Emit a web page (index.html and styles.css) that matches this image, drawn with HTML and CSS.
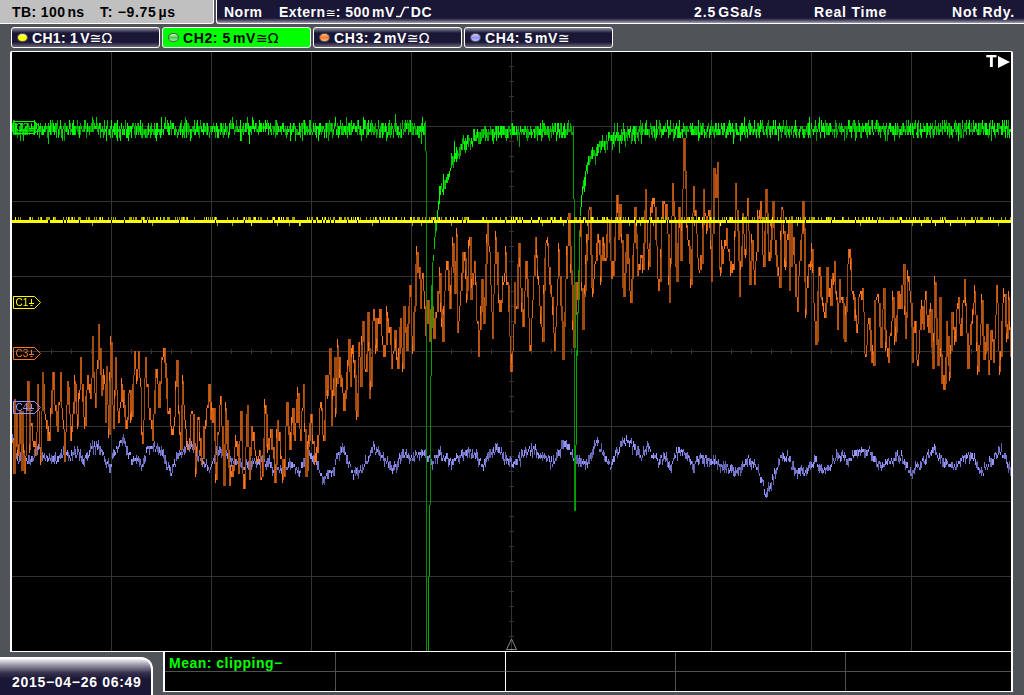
FILE: index.html
```html
<!DOCTYPE html>
<html lang="en">
<head>
  <meta charset="UTF-8" />
  <meta name="viewport" content="width=device-width, initial-scale=1.0" />
  <title>Oscilloscope</title>
  <link rel="stylesheet" href="styles.css">
</head>
<body>
  <header class="topbar">
    <div class="timebase"><span class="tb">TB: 100<i></i>ns</span><span class="pos">T: −9.75<i></i>µs</span></div>
    <div class="trigger">
      <span class="mode">Norm</span>
      <span class="source">Extern<b class="coupling">≅</b>: 500<i></i>mV<svg class="edge" width="14" height="12"><path d="M0 10.500h4.500L8.500 1.500h4.500" /></svg>DC</span>
      <span class="rate">2.5<i></i>GSa/s</span>
      <span class="acq">Real Time</span>
      <span class="state">Not Rdy.</span>
    </div>
  </header>

  <nav class="channels">
    <div class="channel ch1"><span class="led"></span><span>CH1: 1<i></i>V</span><b class="coupling">≅Ω</b></div>
    <div class="channel ch2 active"><span class="led"></span><span>CH2: 5<i></i>mV</span><b class="coupling">≅Ω</b></div>
    <div class="channel ch3"><span class="led"></span><span>CH3: 2<i></i>mV</span><b class="coupling">≅Ω</b></div>
    <div class="channel ch4"><span class="led"></span><span>CH4: 5<i></i>mV</span><b class="coupling">≅</b></div>
  </nav>

  <main class="screen">
    <canvas id="plot" width="999" height="599"></canvas>
    <svg class="marker m1" width="29" height="13"><path d="M.5 .5h21l6 6-6 6H.5z" /><text x="2.5" y="10">C1</text><path d="M18.500 3v5M16 7.500h5M17.500 9.500h2" /></svg>
    <svg class="marker m2" width="29" height="13"><path d="M.5 .5h21l6 6-6 6H.5z" /><text x="2.5" y="10">C2</text><path d="M18.500 3v5M16 7.500h5M17.500 9.500h2" /></svg>
    <svg class="marker m3" width="29" height="13"><path d="M.5 .5h21l6 6-6 6H.5z" /><text x="2.5" y="10">C3</text><path d="M18.500 3v5M16 7.500h5M17.500 9.500h2" /></svg>
    <svg class="marker m4" width="29" height="13"><path d="M.5 .5h21l6 6-6 6H.5z" /><text x="2.5" y="10">C4</text><path d="M18.500 3v5M16 7.500h5M17.500 9.500h2" /></svg>
    <div class="trigpos">T<svg width="12" height="12"><path d="M0 0l12 6L0 12z" /></svg></div>
    <svg class="reference" width="12" height="12"><path d="M5.500 1l5 10.500h-10z" /></svg>
  </main>

  <footer class="bottom">
    <div class="clock">2015−04−26 06:49</div>
    <div class="measure">
      <div class="cell mean">Mean: clipping−</div><div class="cell mid"></div><div class="cell"></div><div class="cell"></div><div class="cell"></div>
      <div class="cell"></div><div class="cell mid"></div><div class="cell"></div><div class="cell"></div><div class="cell"></div>
    </div>
  </footer>

  <script src="scope.js"></script>
</body>
</html>
```
FILE: styles.css
```css
* {
  box-sizing: border-box;
  margin: 0;
  padding: 0;
}

body {
  width: 1024px;
  height: 695px;
  overflow: hidden;
  background: #505459;
  color: #fff;
  font: bold 14px/16px "Liberation Sans", Arial, sans-serif;
  letter-spacing: 0.5px;
  white-space: nowrap;
}

/* thin space between value and unit */
i {
  display: inline-block;
  width: 2px;
}

.coupling {
  font: normal 14px/16px "DejaVu Sans", sans-serif;
  letter-spacing: 0;
}

.source .coupling {
  font-size: 12px;
}

/* top bar */
.topbar {
  display: flex;
  gap: 2px;
  height: 24px;
}

.timebase {
  display: flex;
  width: 214px;
  padding: 4px 0 0 12px;
  background: #c0c0c0;
  border-right: 1px solid #fff;
  border-bottom: 1px solid #fff;
  border-radius: 0 0 3px 0;
  color: #000;
}

.tb {
  width: 88px;
  letter-spacing: 0.4px;
}

.pos {
  letter-spacing: 0.7px;
}

.trigger {
  display: flex;
  flex: 1;
  padding: 4px 0 0 7px;
  background: linear-gradient(#1a1635 18px, #45415f 20px, #a09eb0 23px);
  border-left: 1px solid #fff;
  border-bottom: 1px solid #fff;
  border-radius: 0 0 0 3px;
}

.mode {
  width: 55px;
}

.source {
  width: 415px;
}

.edge {
  margin: 0 1px;
  fill: none;
  stroke: #fff;
  stroke-width: 1.6;
  vertical-align: -1px;
}

.rate {
  width: 120px;
  letter-spacing: 0.9px;
}

.acq {
  width: 138px;
  letter-spacing: 0.8px;
}

.state {
  letter-spacing: 0.8px;
}

/* channel buttons */
.channels {
  display: flex;
  gap: 2px;
  height: 27px;
  padding: 3px 0 0 11px;
}

.channel {
  display: flex;
  align-items: center;
  width: 149px;
  height: 21px;
  padding-left: 5px;
  background: linear-gradient(#8d8b9d, #1a1635 5px, #1a1635 14px, #686579);
  border: 1px solid #fff;
  border-radius: 3px;
  letter-spacing: 0.6px;
}

.ch1 {
  letter-spacing: 0.3px;
}

.channel.active {
  background: #0f0;
  color: #000;
}

.led {
  width: 11px;
  height: 9px;
  margin-right: 4px;
  border: 1px solid #555;
  border-radius: 50%;
}

.ch1 .led { background: linear-gradient(#ffffb0, #ff0 50%); }
.ch2 .led { background: linear-gradient(#e0ffe0, #40d040, #b0f0b0); }
.ch3 .led { background: linear-gradient(#ffc090, #ff7820 50%, #ffc090); }
.ch4 .led { background: linear-gradient(#d0d0ff, #9090ff 50%, #c0c0ff); }

/* waveform screen */
.screen {
  position: relative;
  width: 1003px;
  height: 601px;
  margin-left: 10px;
  background: #000;
  border: 1px solid #fff;
  border-width: 1px 2px;
  border-radius: 2px 2px 0 0;
}

#plot {
  display: block;
}

.marker {
  position: absolute;
  left: 1px;
  fill: none;
  stroke: currentColor;
}

.marker text {
  fill: currentColor;
  stroke: none;
  font: normal 10px "Liberation Sans", Arial, sans-serif;
  letter-spacing: 0;
}

.m1 { top: 244px; color: #ff0; }
.m2 { top: 69px; color: #0f0; }
.m3 { top: 295px; color: #ff7820; }
.m4 { top: 349px; color: #9696ff; }

.trigpos {
  position: absolute;
  top: 3px;
  right: 1px;
  display: flex;
  align-items: center;
  gap: 1px;
  height: 13px;
  font-family: "DejaVu Sans", sans-serif;
  font-size: 15px;
}

.trigpos svg {
  fill: #fff;
}

.reference {
  position: absolute;
  left: 494px;
  bottom: 1px;
  fill: none;
  stroke: #888;
}

/* clock and measurement table */
.bottom {
  display: flex;
  justify-content: space-between;
  height: 43px;
  padding-right: 11px;
}

.clock {
  width: 153px;
  height: 38px;
  margin-top: 5px;
  padding: 15px 0 0 12px;
  background: linear-gradient(#f0f0f4, #8c8a9c 7px, #35314e 14px, #1a1635 20px);
  border-top: 2px solid #fff;
  border-right: 2px solid #fff;
  border-radius: 0 12px 0 0;
  letter-spacing: 0.7px;
}

.measure {
  display: grid;
  grid-template-columns: 171px 170px 170px 170px 1fr;
  grid-template-rows: 20px 19px;
  width: 850px;
  height: 40px;
  background: #000;
  border: 1px solid #fff;
  border-width: 0 2px 1px;
}

.cell {
  border-right: 1px solid #505050;
}

.cell:nth-child(-n+5) {
  border-bottom: 1px solid #505050;
}

.cell.mid {
  border-right-color: #fff;
}

.cell:nth-child(5n) {
  border-right: none;
}

.mean {
  padding: 3px 0 0 4px;
  color: #0f0;
}
```
FILE: scope.js
```js
const ctx = document.getElementById("plot").getContext("2d");
ctx.translate(-12, -52); // traces use screen coordinates

let seed = 20150426;
function rnd() {
  seed = (seed * 1664525 + 1013904223) % 4294967296;
  return seed / 4294967296;
}

function bar(x, top, bottom, color) {
  ctx.fillStyle = color;
  ctx.fillRect(x, top, 1, Math.max(3, bottom - top));
}

// ADC levels are 3px apart
const level = y => 3 * Math.round(y / 3);

function interpolate(points, x) {
  let i = 1;
  while (i < points.length - 1 && points[i][0] < x) i++;
  const a = points[i - 1], b = points[i];
  const t = Math.min(1, Math.max(0, (x - a[0]) / (b[0] - a[0])));
  return a[1] + (b[1] - a[1]) * t;
}

function drawGrid() {
  ctx.fillStyle = "#333";
  for (let x = 111; x < 1011; x += 100) ctx.fillRect(x, 52, 1, 599);
  for (let y = 126; y < 651; y += 75) ctx.fillRect(12, y, 999, 1);
  for (let x = 31; x < 1011; x += 20) ctx.fillRect(x, 349, 1, 5);
  for (let y = 66; y < 651; y += 15) ctx.fillRect(509, y, 5, 1);
}

const pairs = s => s.trim().split(/\s+/).map(p => p.split(",").map(Number));

const ch4 = pairs(`
  12,438 15,450 18,462 23,457 30,461 38,446 42,457 52,460 60,457 65,451 70,456 77,453 84,460 90,449 97,445
  103,457 110,466 115,450 123,439 131,460 136,457 142,466 147,450 157,444 163,455 170,472 176,460 183,450
  190,443 198,455 209,468 217,452 225,450 232,460 240,465 258,462 268,462 274,471 283,468 292,464 299,474
  307,454 315,458 322,480 329,470 333,473 337,452 343,450 353,473 360,471 373,447 384,460 393,470 403,452
  412,457 420,452 427,455 431,463 440,453 452,463 460,456 468,453 475,453 482,465 496,448 505,460 512,463
  520,458 529,449 537,451 552,463 563,444 573,455 580,463 588,463 596,441 601,450 610,465 617,452 624,439
  634,448 641,457 647,445 653,455 658,462 664,457 670,467 679,448 686,457 693,467 701,458 713,460 722,465
  735,473 742,468 748,457 757,468 763,485 766,493 771,482 780,458 788,457 794,470 805,472 814,460 820,470
  828,470 836,457 843,455 848,462 856,453 868,450 874,458 883,466 890,460 901,455 911,472 925,458 934,448
  940,460 956,467 966,456 972,457 981,473 990,462 1001,450 1010,469`);

const ch3 = pairs(`
  12,440 13,474 14,400 17,455 19,412 21,472 22,410 24,474 27,382 29,450 30,425 35,455 37,385 40,462 42,373
  44,415 49,441 52,373 55,410 57,432 60,373 62,420 64,462 67,380 70,441 74,382 77,425 80,358 84,426 87,376
  90,400 92,337 95,408 98,325 101,395 104,385 105,423 106,367 108,435 110,343 113,430 115,358 118,423
  121,385 125,429 128,392 131,417 134,352 136,380 138,352 142,445 145,358 149,420 152,441 155,370 158,407
  161,358 164,364 166,400 170,426 174,416 176,361 180,450 182,382 185,430 188,445 191,412 195,474 197,417
  201,466 204,425 208,385 210,420 213,408 215,480 217,433 220,397 223,486 225,409 229,486 233,470 235,442
  238,475 240,412 243,489 247,406 249,480 251,425 254,450 258,455 261,477 264,406 267,450 270,430 274,483
  277,421 280,455 283,478 286,403 289,450 292,409 294,440 297,394 300,442 303,385 305,478 308,440 311,415
  314,462 318,436 320,403 323,442 325,376 327,395 329,347 331,426 334,358 335,414 337,346 340,388 344,400
  348,340 350,388 352,346 356,417 358,342 360,387 362,322 365,373 367,313 369,400 373,310 375,350 379,310
  381,337 384,358 386,313 390,345 391,369 394,331 397,369 400,319 402,369 403,307 406,351 409,286 412,352
  415,265 418,268 420,310 422,274 425,335 427,300 429,342 431,285 433,340 439,274 442,343 446,262 449,310
  452,244 454,295 456,235 457,333 460,290 463,253 466,300 469,238 470,300 474,262 478,358 481,280 483,325
  487,223 490,285 492,340 495,238 499,312 502,282 505,253 507,285 510,372 512,350 514,281 516,310 518,244
  522,328 525,262 529,351 532,300 535,238 538,285 542,342 544,259 547,242 550,295 554,351 558,250 562,360
  565,280 568,214 571,285 573,348 575,283 577,300 580,223 582,330 585,262 587,235 589,208 591,288 595,262
  597,235 600,282 602,238 604,260 608,222 611,280 615,220 616,196 618,240 619,205 623,298 626,235 630,303
  634,208 637,276 641,255 642,270 645,190 648,267 651,202 654,208 658,292 662,202 665,220 666,205 669,303
  672,184 676,282 678,208 680,262 683,139 686,225 690,285 693,187 697,257 701,265 703,190 706,230 708,210
  711,282 713,169 715,198 717,163 719,270 724,240 726,228 729,262 733,270 735,184 739,297 742,214 745,255
  747,199 749,285 751,240 754,285 757,217 760,200 763,267 765,190 768,262 772,202 774,240 779,288 781,208
  785,267 788,222 789,291 791,215 793,256 797,312 800,240 802,202 805,315 808,265 811,250 814,320 816,342
  818,268 821,300 824,318 826,268 830,305 834,260 837,330 839,278 844,342 848,250 851,290 852,295 856,333
  859,295 862,289 864,355 868,318 870,350 873,367 874,300 877,295 880,349 883,289 885,347 888,364 892,298
  894,343 897,292 900,308 901,285 903,265 905,339 907,277 909,290 912,364 914,322 917,367 920,308 923,330
  925,292 928,333 930,310 932,370 934,283 937,366 939,298 941,385 944,383 946,320 949,378 951,313 954,343
  958,298 960,335 964,280 967,369 971,320 974,292 977,372 981,301 983,360 986,325 988,375 990,330 993,363
  996,286 999,372 1001,320 1004,295 1006,340 1008,298 1010,357`);

const recovery1 = pairs("433,258 434,244 436,225 438,205 440,190 445,182 449,174 452,161 458,153 462,144 470,139 480,135 500,132 572,131");
const recovery2 = pairs("580,212 582,190 585,176 590,158 597,150 605,142 615,135 640,131");

// [x, top, bottom] of the clipped pulses
const pulses = [
  [425, 121, 151], [426, 151, 651], [428, 577, 651], [429, 505, 577], [430, 376, 505], [431, 285, 376], [432, 262, 328],
  [573, 126, 199], [574, 199, 511], [575, 445, 511], [576, 350, 445], [577, 312, 356], [578, 270, 313], [579, 230, 272]
];

function drawCh4() {
  const shades = ["#9696ff", "#7676cc", "#6060a5"];
  for (let x = 12; x < 1011; x++) {
    const y = level(interpolate(ch4, x) + (rnd() - 0.5) * 7);
    const h = 3 + 3 * Math.floor(rnd() * 3);
    bar(x, y - Math.floor(h / 2), y - Math.floor(h / 2) + h, shades[h > 6 ? 1 + Math.floor(rnd() * 2) : Math.floor(rnd() * 2)]);
  }
}

function drawCh3() {
  const shades = ["#ff7820", "#d86010", "#b8540f", "#9c4a10"];
  let last = 440, lastTop = 440, lastBottom = 440;
  for (let x = 12; x < 1011; x++) {
    const exact = ch3.some(p => p[0] === x);
    const y = level(interpolate(ch3, x) + (exact ? 0 : (rnd() - 0.5) * 26));
    let top = Math.min(last, y), bottom = Math.max(last, y);
    const ownTop = top, ownBottom = bottom;
    // the beam often covers the previous column's span again
    if (rnd() < 0.5) {
      top = Math.min(top, lastTop);
      bottom = Math.max(bottom, lastBottom);
    }
    const len = bottom - top;
    const shade = len > 36 ? 3 : len > 20 ? 2 : len > 9 ? 1 : 0;
    bar(x, top, bottom, shades[shade]);
    if (rnd() < 0.22) bar(x, y - 6, y + 3, shades[0]);
    lastTop = ownTop;
    lastBottom = ownBottom;
    last = y;
  }
}

function drawCh2() {
  const shades = ["#0f0", "#00d000", "#00a800", "#008c00"];
  for (let x = 12; x < 1011; x++) {
    if ((x > 424 && x < 433) || (x > 572 && x < 580)) continue;
    let y = 129;
    if (x > 432 && x < 573) y = interpolate(recovery1, x);
    if (x > 579) y = Math.max(129, interpolate(recovery2, x) - Math.max(0, x - 640) / 80);
    let up = rnd() * 8, down = 1 + rnd() * 7;
    if (rnd() < 0.12) up += rnd() * 9;
    if (rnd() < 0.1) down += rnd() * 8;
    const drift = (rnd() - 0.5) * 6;
    bar(x, level(y + drift - up), level(y + drift + down), shades[Math.floor(rnd() * 3)]);
  }
  pulses.forEach(p => bar(p[0], p[1], p[2], p[2] - p[1] > 100 ? shades[3] : shades[2]));
}

function drawCh1() {
  ctx.fillStyle = "#ff0";
  ctx.fillRect(12, 220, 999, 3);
  for (let x = 12; x < 1011; x++) {
    const r = rnd();
    if (r < 0.36) bar(x, 217, 220, rnd() < 0.25 ? "#ff0" : "#a8a800");
    else if (r < 0.4) bar(x, 223, 226, rnd() < 0.4 ? "#ff0" : "#a8a800");
    if (r < 0.04) {
      ctx.fillStyle = "#000";
      ctx.fillRect(x, 220, 1, 3);
    }
  }
}

drawGrid();
drawCh4();
drawCh3();
drawCh2();
drawCh1();
```
